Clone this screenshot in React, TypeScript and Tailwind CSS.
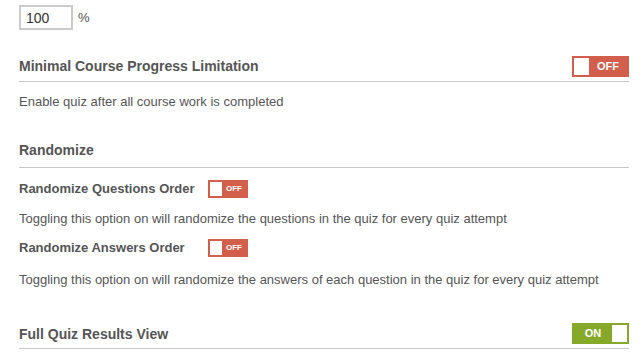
const Toggle = ({ on, big }: { on: boolean; big?: boolean }) => {
  const color = on ? "bg-[#86a92a]" : "bg-[#d25f4c]";
  if (big) {
    return (
      <div className={`flex h-[21px] w-[57px] items-stretch p-[2px] ${color} ${on ? "flex-row-reverse" : ""}`}>
        <div className="w-[15px] bg-white" />
        <div className="flex flex-1 items-center justify-center text-[11px] font-bold leading-none text-white">
          {on ? "ON" : "OFF"}
        </div>
      </div>
    );
  }
  return (
    <div className={`flex h-[18px] w-[40px] items-stretch p-[2px] ${color}`}>
      <div className="w-[12px] bg-white" />
      <div className="flex flex-1 items-center justify-center text-[8px] font-bold leading-none text-white">
        {on ? "ON" : "OFF"}
      </div>
    </div>
  );
};

export default function App() {
  return (
    <div className="min-h-[363px] w-[644px] bg-white px-[19px] pt-[5px] font-['Liberation_Sans',Arial,sans-serif] text-[#555]">
      <div className="w-[610px]">
        {/* percentage input */}
        <div className="flex h-[25px] items-center">
          <input
            defaultValue="100"
            className="h-[25px] w-[54px] border-2 border-[#cbcbcb] px-[5px] font-['Liberation_Sans',Arial,sans-serif] text-[14px] text-[#333] outline-none"
          />
          <span className="ml-[5px] text-[13px] text-[#555]">%</span>
        </div>

        {/* Minimal Course Progress Limitation */}
        <div className="mt-[26px] flex items-center justify-between border-b border-[#c8c8c8] pb-[4px]">
          <h3 className="text-[14px] font-bold leading-[21px] text-[#555]">Minimal Course Progress Limitation</h3>
          <Toggle on={false} big />
        </div>
        <p className="mt-[12px] text-[13px] leading-[16px]">Enable quiz after all course work is completed</p>

        {/* Randomize */}
        <div className="mt-[30px] border-b border-[#c8c8c8] pb-[7px]">
          <h3 className="text-[14px] font-bold leading-[20px] text-[#555]">Randomize</h3>
        </div>

        <div className="mt-[12px] flex h-[18px] items-center">
          <span className="w-[189px] text-[13px] font-bold text-[#555]">Randomize Questions Order</span>
          <Toggle on={false} />
        </div>
        <p className="mt-[13px] text-[13px] leading-[16px]">
          Toggling this option on will randomize the questions in the quiz for every quiz attempt
        </p>

        <div className="mt-[12px] flex h-[18px] items-center">
          <span className="w-[189px] text-[13px] font-bold text-[#555]">Randomize Answers Order</span>
          <Toggle on={false} />
        </div>
        <p className="mt-[15px] text-[13px] leading-[16px]">
          Toggling this option on will randomize the answers of each question in the quiz for every quiz attempt
        </p>

        {/* Full Quiz Results View */}
        <div className="mt-[35px] flex items-center justify-between border-b border-[#c8c8c8] pb-[3px]">
          <h3 className="text-[14px] font-bold leading-[22px] text-[#555]">Full Quiz Results View</h3>
          <div className="h-[22px]">
            <Toggle on big />
          </div>
        </div>
      </div>
    </div>
  );
}
